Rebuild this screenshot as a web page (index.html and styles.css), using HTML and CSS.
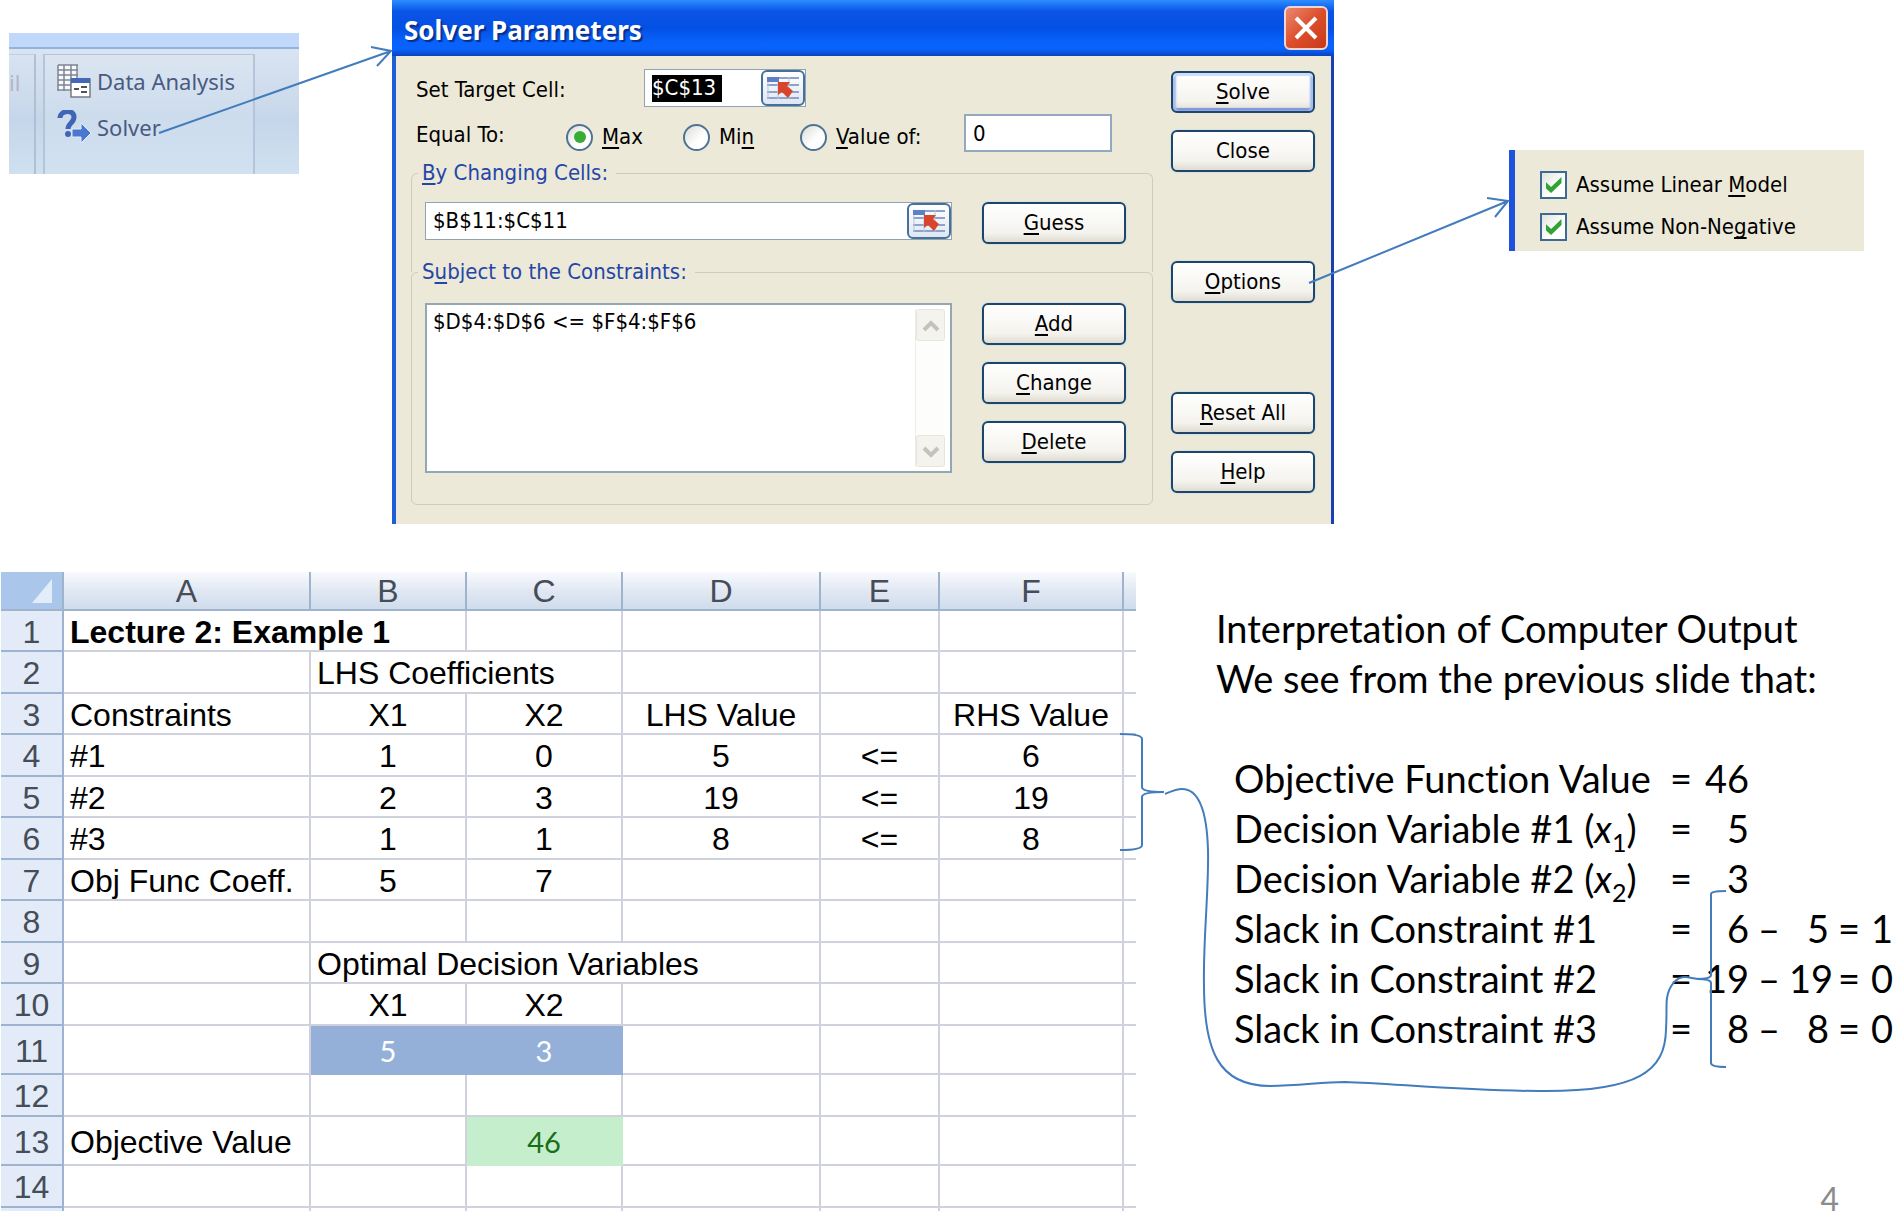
FILE: index.html
```html
<!DOCTYPE html>
<html lang="en">
<head>
<meta charset="utf-8">
<title>Solver Parameters and Computer Output</title>
<link rel="stylesheet" href="styles.css">
</head>
<body>
<svg class="defs" width="0" height="0" aria-hidden="true">
  <symbol id="ref-icon" viewBox="0 0 34 24">
    <path d="M1 2h32M1 9h32M1 16h32M1 22h32" stroke="#8ea3c8" stroke-width="2"/>
    <path d="M2 1v22M12 1v22M23 1v22" stroke="#b9c6de" stroke-width="1"/>
    <path d="M1 1h12v5H1z" fill="#5f80c4"/>
    <path d="M12 6h12l-3 4 6 5-5 7-6-6-4 3z" fill="#d8452c"/>
  </symbol>
</svg>

<main class="slide">
  <section class="top">
    <div class="ribbon">
      <div class="ribbon-tabs"></div>
      <div class="ribbon-body">
        <div class="ribbon-prev">il</div>
        <div class="ribbon-group">
          <button class="ribbon-item" type="button">
            <svg width="34" height="34" viewBox="0 0 34 34" aria-hidden="true">
              <path d="M1 1h20v26H1z" fill="#f7f9fc"/>
              <path d="M1 1h20M1 6h20M1 11h20M1 16h20M1 21h14M1 26h14M1 1v26M7 1v26M14 1v26M20 1v14" fill="none" stroke="#7d8492" stroke-width="1.5"/>
              <path d="M14 15h19v18H14z" fill="#fff" stroke="#777c86" stroke-width="1.5"/>
              <path d="M14 14h19v5H14z" fill="#4468b8"/>
              <path d="M17 25h5M24 23h6M24 28h6" stroke="#555" stroke-width="2"/>
            </svg>
            <span>Data Analysis</span>
          </button>
          <button class="ribbon-item" type="button">
            <svg width="34" height="34" viewBox="0 0 34 34" aria-hidden="true">
              <path d="M3 8C3 0 17-1 17 7c0 6-6 6-6 12" fill="none" stroke="#3f66b5" stroke-width="5"/>
              <circle cx="11" cy="24" r="3" fill="#3f66b5"/>
              <path d="M15 19h9v-6l10 10-10 10v-6h-9z" fill="#4a78d0" stroke="#e3ecf8" stroke-width="1"/>
            </svg>
            <span>Solver</span>
          </button>
        </div>
        <div class="ribbon-rest"></div>
      </div>
    </div>

    <form class="dialog">
      <header class="titlebar">
        <h1>Solver Parameters</h1>
        <button class="close" type="button" aria-label="Close window">
          <svg width="24" height="24" viewBox="0 0 24 24" aria-hidden="true"><path d="M2 2l20 20M22 2L2 22" stroke="#fff" stroke-width="4"/></svg>
        </button>
      </header>
      <div class="dialog-body">
        <div class="settings">
          <div class="row">
            <label class="row-label" for="target">Set Target Cell:</label>
            <div class="ref-box ref-small">
              <input class="selected" id="target" type="text" value="$C$13">
              <button class="ref-btn" type="button" aria-label="Select target cell"><svg width="34" height="24" aria-hidden="true"><use href="#ref-icon"/></svg></button>
            </div>
          </div>
          <div class="row">
            <span class="row-label">Equal To:</span>
            <div class="radios">
              <label class="radio"><input type="radio" name="equal" checked><span><u>M</u>ax</span></label>
              <label class="radio"><input type="radio" name="equal"><span>Mi<u>n</u></span></label>
              <label class="radio"><input type="radio" name="equal"><span><u>V</u>alue of:</span></label>
            </div>
            <input class="value" type="text" value="0" aria-label="Value">
          </div>
          <fieldset class="changing">
            <legend><u>B</u>y Changing Cells:</legend>
            <div class="pair">
              <div class="ref-box">
                <input type="text" value="$B$11:$C$11" aria-label="Changing cells">
                <button class="ref-btn" type="button" aria-label="Select changing cells"><svg width="34" height="24" aria-hidden="true"><use href="#ref-icon"/></svg></button>
              </div>
              <button class="btn" type="button"><span><u>G</u>uess</span></button>
            </div>
          </fieldset>
          <fieldset class="constraints">
            <legend>S<u>u</u>bject to the Constraints:</legend>
            <div class="pair">
              <div class="list-box">
                <select size="5" aria-label="Constraints"><option>$D$4:$D$6 &lt;= $F$4:$F$6</option></select>
                <div class="scrollbar">
                  <button type="button" aria-label="Scroll up"><svg width="18" height="12" viewBox="0 0 18 12" aria-hidden="true"><path d="M2 10l7-7 7 7" fill="none" stroke="#c4c3ba" stroke-width="4"/></svg></button>
                  <button type="button" aria-label="Scroll down"><svg width="18" height="12" viewBox="0 0 18 12" aria-hidden="true"><path d="M2 2l7 7 7-7" fill="none" stroke="#c4c3ba" stroke-width="4"/></svg></button>
                </div>
              </div>
              <div class="stack">
                <button class="btn" type="button"><span><u>A</u>dd</span></button>
                <button class="btn" type="button"><span><u>C</u>hange</span></button>
                <button class="btn" type="button"><span><u>D</u>elete</span></button>
              </div>
            </div>
          </fieldset>
        </div>
        <div class="actions">
          <div class="stack">
            <button class="btn default" type="button"><span><u>S</u>olve</span></button>
            <button class="btn" type="button"><span>Close</span></button>
          </div>
          <button class="btn" type="button"><span><u>O</u>ptions</span></button>
          <div class="stack">
            <button class="btn" type="button"><span><u>R</u>eset All</span></button>
            <button class="btn" type="button"><span><u>H</u>elp</span></button>
          </div>
        </div>
      </div>
    </form>

    <div class="options">
      <label class="check"><input type="checkbox" checked><span>Assume Linear <u>M</u>odel</span></label>
      <label class="check"><input type="checkbox" checked><span>Assume Non-Ne<u>g</u>ative</span></label>
    </div>

    <svg class="connectors" viewBox="0 0 1895 524" preserveAspectRatio="none" aria-hidden="true">
      <path d="M159 133L391 51M371 47L391 51L377 66"/>
      <path d="M1309 283L1508 201M1487 198L1508 201L1495 217"/>
    </svg>
  </section>

  <section class="bottom">
    <table class="sheet">
      <colgroup><col class="c-row"><col class="c-a"><col class="c-b"><col class="c-b"><col class="c-d"><col class="c-e"><col class="c-f"><col class="c-g"></colgroup>
      <thead>
        <tr><th class="corner"><svg width="20" height="24" viewBox="0 0 20 24" aria-hidden="true"><path d="M20 0v24H0z" fill="#e3edf9"/></svg></th><th>A</th><th>B</th><th>C</th><th>D</th><th>E</th><th>F</th><th></th></tr>
      </thead>
      <tbody>
        <tr><th>1</th><td class="title" colspan="2">Lecture 2: Example 1</td><td></td><td></td><td></td><td></td><td></td></tr>
        <tr><th>2</th><td></td><td class="text" colspan="2">LHS Coefficients</td><td></td><td></td><td></td><td></td></tr>
        <tr><th>3</th><td class="text">Constraints</td><td>X1</td><td>X2</td><td>LHS Value</td><td></td><td>RHS Value</td><td></td></tr>
        <tr><th>4</th><td class="text">#1</td><td>1</td><td>0</td><td>5</td><td>&lt;=</td><td>6</td><td></td></tr>
        <tr><th>5</th><td class="text">#2</td><td>2</td><td>3</td><td>19</td><td>&lt;=</td><td>19</td><td></td></tr>
        <tr><th>6</th><td class="text">#3</td><td>1</td><td>1</td><td>8</td><td>&lt;=</td><td>8</td><td></td></tr>
        <tr><th>7</th><td class="text">Obj Func Coeff.</td><td>5</td><td>7</td><td></td><td></td><td></td><td></td></tr>
        <tr><th>8</th><td></td><td></td><td></td><td></td><td></td><td></td><td></td></tr>
        <tr><th>9</th><td></td><td class="text" colspan="3">Optimal Decision Variables</td><td></td><td></td><td></td></tr>
        <tr><th>10</th><td></td><td>X1</td><td>X2</td><td></td><td></td><td></td><td></td></tr>
        <tr class="tall"><th>11</th><td></td><td class="decision">5</td><td class="decision">3</td><td></td><td></td><td></td><td></td></tr>
        <tr><th>12</th><td></td><td></td><td></td><td></td><td></td><td></td><td></td></tr>
        <tr class="tall"><th>13</th><td class="text">Objective Value</td><td></td><td class="objective">46</td><td></td><td></td><td></td><td></td></tr>
        <tr><th>14</th><td></td><td></td><td></td><td></td><td></td><td></td><td></td></tr>
        <tr class="cut"><th></th><td></td><td></td><td></td><td></td><td></td><td></td><td></td></tr>
      </tbody>
    </table>

    <article class="notes">
      <p>Interpretation of Computer Output<br>We see from the previous slide that:</p>
      <table class="results">
        <colgroup><col><col class="r-eq"><col class="r-num"><col class="r-op"><col class="r-op"><col class="r-op"><col class="r-out"></colgroup>
        <tbody>
          <tr><th>Objective Function Value</th><td>=</td><td class="num">46</td><td></td><td></td><td></td><td></td></tr>
          <tr><th>Decision Variable #1 (<i>x</i><sub>1</sub>)</th><td>=</td><td class="num">5</td><td></td><td></td><td></td><td></td></tr>
          <tr><th>Decision Variable #2 (<i>x</i><sub>2</sub>)</th><td>=</td><td class="num">3</td><td></td><td></td><td></td><td></td></tr>
          <tr><th>Slack in Constraint #1</th><td>=</td><td class="num">6</td><td>–</td><td class="num">5</td><td>=</td><td>1</td></tr>
          <tr><th>Slack in Constraint #2</th><td>=</td><td class="num">19</td><td>–</td><td class="num">19</td><td>=</td><td>0</td></tr>
          <tr><th>Slack in Constraint #3</th><td>=</td><td class="num">8</td><td>–</td><td class="num">8</td><td>=</td><td>0</td></tr>
        </tbody>
      </table>
      <footer class="page-number">4</footer>
    </article>

    <svg class="connectors" viewBox="0 572 1895 645" preserveAspectRatio="none" aria-hidden="true">
      <path d="M1120 734Q1142 734 1142 739V787Q1142 792 1164 792Q1142 792 1142 797V845Q1142 850 1120 850"/>
      <path d="M1165 794C1172 791 1176 789 1182 789C1200 789 1207 815 1208 850C1209 890 1203 940 1204 985C1204 1050 1218 1086 1270 1086C1300 1086 1320 1082 1345 1082C1390 1083 1460 1091 1540 1091C1640 1092 1665 1070 1666 1030C1667 1010 1666 1005 1667 998C1669 985 1677 977 1685 977C1690 977 1694 979 1700 979"/>
      <path d="M1726 891Q1711 891 1711 894V975Q1711 979 1697 979Q1711 979 1711 983V1063Q1711 1067 1726 1067"/>
    </svg>
  </section>
</main>
</body>
</html>
```
FILE: styles.css
```css
* { box-sizing: border-box; }

body {
  margin: 0;
  background: #fff;
  color: #000;
  font-family: "Lato", sans-serif;
}

button, input, select {
  margin: 0;
  padding: 0;
  border: 0;
  background: none;
  color: inherit;
  font: inherit;
}

.defs { position: absolute; }

.top, .bottom {
  position: relative;
  display: grid;
  align-items: start;
}

.top { grid-template-columns: 9fr 290fr 93fr 942fr 175fr 355fr 31fr; }

.connectors {
  position: absolute;
  inset: 0;
  width: 100%;
  height: 100%;
  pointer-events: none;
}

.connectors path {
  fill: none;
  stroke: #427cbc;
  stroke-width: 2;
  vector-effect: non-scaling-stroke;
}

/* Ribbon fragment */
.ribbon {
  grid-column: 2;
  min-width: 0;
  margin-top: 33px;
  font-family: "Noto Sans", sans-serif;
  font-size: 22px;
  color: #4a5a80;
}

.ribbon-tabs {
  height: 16px;
  background: #c0d9fa;
  border-bottom: 2px solid #93b3db;
}

.ribbon-body {
  display: flex;
  height: 125px;
  padding-top: 5px;
  background: linear-gradient(#d9e4f2, #cbd9eb 45%, #c5d6eb 55%, #cfe0f0);
}

.ribbon-prev {
  width: 27px;
  padding-top: 12px;
  border-top: 1px solid #c2cfdf;
  border-right: 2px solid #b0bfd3;
  color: #b3b6c3;
  line-height: 30px;
}

.ribbon-group {
  flex: 1;
  display: flex;
  flex-direction: column;
  gap: 12px;
  margin-left: 7px;
  padding: 9px 0 0 12px;
  border: 2px solid #b5c4d8;
  border-width: 1px 2px 0;
  background: linear-gradient(#dbe5f1, #cddced 50%, #d1e1f0);
}

.ribbon-rest { width: 44px; }

.ribbon-item {
  display: flex;
  align-items: center;
  gap: 6px;
  height: 34px;
  line-height: 30px;
  white-space: nowrap;
}

/* Solver dialog */
.dialog {
  grid-column: 4;
  border: solid #1e5fd8;
  border-width: 0 3px 0 4px;
  border-right-color: #1a3fb4;
  background: #ece9d8;
}

.dialog, .options {
  font-family: "DejaVu Sans Condensed", "DejaVu Sans", sans-serif;
  font-size: 22px;
  line-height: 28px;
}

u {
  text-decoration-thickness: 2px;
  text-decoration-skip-ink: none;
  text-underline-offset: 3px;
}

.titlebar {
  display: flex;
  align-items: center;
  justify-content: space-between;
  height: 56px;
  margin: 0 -3px 0 -4px;
  padding: 0 6px 0 12px;
  background: linear-gradient(#2d8dff, #0a55e6 20%, #0450e4 50%, #0862fb 75%, #0862fb 88%, #0a43bd);
}

.titlebar h1 {
  margin: 0;
  padding-top: 3px;
  color: #fff;
  font-family: "Noto Sans", sans-serif;
  font-size: 26px;
  font-weight: 700;
  line-height: 36px;
  text-shadow: 2px 2px 1px #0a2f8c;
}

.close {
  display: grid;
  place-items: center;
  width: 44px;
  height: 44px;
  border: 2px solid #f3d5d0;
  border-radius: 6px;
  background: linear-gradient(135deg, #e98a70, #dd4e2c 50%, #c8391a);
}

.dialog-body {
  display: flex;
  gap: 18px;
  padding: 13px 16px 19px 15px;
}

.settings { flex: 1; min-width: 0; }

.row {
  display: flex;
  align-items: center;
  height: 38px;
  margin-bottom: 7px;
  padding-left: 5px;
}

.row-label { width: 150px; padding-top: 3px; white-space: nowrap; }

.ref-box {
  flex: 1;
  display: flex;
  align-items: center;
  height: 38px;
  border: 1px solid #8fa3b5;
  background: #fff;
}

.ref-box input { flex: 1; min-width: 0; padding-left: 7px; }

.ref-small {
  flex: none;
  justify-content: space-between;
  width: 162px;
  margin-left: 78px;
  padding-left: 7px;
}

.ref-small .selected {
  flex: none;
  width: 70px;
  height: 27px;
  padding: 0;
  background: #000;
  color: #fff;
}

.ref-btn {
  display: grid;
  place-items: center;
  width: 44px;
  height: 36px;
  border: 2px solid #46719b;
  border-radius: 6px;
  background: linear-gradient(#fff, #dfe6f2);
}

.radios { display: flex; flex: 1; padding-top: 8px; }

.radio {
  display: flex;
  align-items: center;
  gap: 9px;
  width: 117px;
  white-space: nowrap;
}

.radio input {
  appearance: none;
  flex: none;
  display: grid;
  place-items: center;
  width: 27px;
  height: 27px;
  border: 2px solid #4d7396;
  border-radius: 50%;
  background: linear-gradient(135deg, #dcdcd4, #fff 60%);
}

.radio input:checked::after {
  content: "";
  width: 12px;
  height: 12px;
  border-radius: 50%;
  background: #37ad37;
}

.value {
  width: 148px;
  height: 38px;
  margin-right: 41px;
  padding-left: 7px;
  border: 2px solid #94a9c0;
  background: #fff;
}

fieldset {
  min-width: 0;
  margin: 0;
  padding: 15px 26px 28px 13px;
  border: 1px solid #cfccb8;
  border-radius: 6px;
}

legend {
  margin-left: -7px;
  padding: 0 8px 0 4px;
  color: #2446a8;
  line-height: 28px;
}

.changing { border-bottom: 0; border-radius: 6px 6px 0 0; }

.constraints {
  margin-top: -14px;
  padding-top: 17px;
  padding-bottom: 31px;
}

.pair { display: flex; gap: 30px; }

.list-box {
  flex: 1;
  display: flex;
  min-width: 0;
  height: 170px;
  padding: 4px 5px 4px 0;
  border: 2px solid #93a8b2;
  background: #fff;
}

.list-box select {
  flex: 1;
  min-width: 0;
  overflow: hidden;
  outline: 0;
}

.list-box option { padding: 0 6px; min-height: 28px; line-height: 28px; }

.scrollbar {
  display: flex;
  flex-direction: column;
  justify-content: space-between;
  width: 30px;
  border-left: 1px solid #eeede5;
  background: #fdfdfb;
}

.scrollbar button {
  height: 32px;
  border: 1px solid #e6e5dc;
  border-radius: 3px;
  background: #f4f3ee;
}

.stack { display: flex; flex-direction: column; gap: 17px; }

.btn {
  display: grid;
  place-items: center;
  width: 144px;
  height: 42px;
  border: 2px solid #1f4668;
  border-radius: 6px;
  background: linear-gradient(#fff, #f4f3ee 75%, #dfddd2);
  box-shadow: 0 0 1px 1px #d5e2e6;
}

.default { box-shadow: inset 0 3px 1px #c9defa, inset 3px 0 2px #a5bdee, inset -3px 0 2px #a5bdee, inset 0 -3px 1px #7a93dc; }

.pair .btn { flex: none; }

.actions {
  display: flex;
  flex-direction: column;
  justify-content: space-between;
  height: 424px;
  padding: 2px 0 0;
}

/* Options fragment */
.options {
  grid-column: 6;
  display: flex;
  flex-direction: column;
  gap: 14px;
  min-width: 0;
  height: 101px;
  margin-top: 150px;
  padding: 21px 0 0 25px;
  border-left: 6px solid #1f52dc;
  background: #ece9d8;
  white-space: nowrap;
}

.check { display: flex; align-items: center; gap: 9px; }

.check input {
  appearance: none;
  display: grid;
  place-items: center;
  width: 27px;
  height: 28px;
  border: 2px solid #3d6a94;
  background: linear-gradient(135deg, #e2e2dc, #fff 60%);
}

.check input:checked::after {
  content: "";
  width: 16px;
  height: 16px;
  background: #2fa336;
  clip-path: polygon(0 30%, 35% 62%, 100% 0, 100% 38%, 35% 100%, 0 68%);
}

/* Spreadsheet */
.bottom {
  grid-template-columns: 1fr 1135fr 80fr 679fr;
  align-items: stretch;
  min-height: 645px;
  margin-top: 48px;
}

.sheet {
  grid-column: 2;
  align-self: start;
  width: 100%;
  table-layout: fixed;
  border-collapse: separate;
  border-spacing: 0;
  font-family: "Liberation Sans", sans-serif;
  font-size: 32px;
  line-height: 36px;
}

.c-row { width: 63px; }
.c-a { width: 247px; }
.c-b { width: 156px; }
.c-d { width: 198px; }
.c-e { width: 119px; }
.c-f { width: 184px; }
.c-g { width: 12px; }

.sheet th, .sheet td {
  height: 41px;
  padding: 2px 0 0;
  border: solid #cfd1dc;
  border-width: 0 2px 2px 0;
  text-align: center;
  white-space: nowrap;
}

.sheet th:last-child, .sheet td:last-child { border-right: 0; }

.sheet tbody tr:nth-child(even) > * { height: 42px; }
.sheet tbody .tall > * { height: 49px; }
.sheet tbody .cut > * { height: 3px; padding: 0; border-bottom: 0; line-height: 0; }

.sheet th { color: #454d59; font-weight: 400; }

.sheet thead th {
  height: 39px;
  padding: 0;
  border-color: #9fb3cc;
  background: linear-gradient(#f8fafd, #e2e8f3 50%, #cfdcec);
}

.sheet tbody th {
  border-color: #9db3d0;
  background: #e2ebf7;
}

.sheet thead .corner {
  padding-right: 10px;
  background: #aac6ea;
}

.corner svg { display: block; margin-left: auto; }

.sheet .text, .sheet .title { padding-left: 6px; text-align: left; }
.sheet .title { font-weight: 700; }

.sheet .decision, .sheet .objective { font-family: "Lato", sans-serif; font-size: 29px; }
.sheet .decision { border-color: #95b0d8; background: #95b0d8; color: #fff; }
.sheet .objective { border-color: #c5eecd; background: #c5eecd; color: #1a6e1a; }

/* Interpretation text */
.notes {
  grid-column: 4;
  display: flex;
  flex-direction: column;
  min-width: 0;
  padding-top: 31px;
  font-size: 38px;
  font-variant-ligatures: none;
  line-height: 50px;
}

.notes p { margin: 0 0 50px; white-space: nowrap; }

.results {
  width: 100%;
  padding-left: 18px;
  table-layout: fixed;
  border-collapse: separate;
  border-spacing: 0;
}

.results th, .results td {
  height: 50px;
  padding: 0;
  font-weight: 400;
  text-align: center;
  white-space: nowrap;
}

.results th { text-align: left; }
.results .num { text-align: right; }
.results sub { font-size: 25px; line-height: 0; }

.r-eq { width: 36px; }
.r-num { width: 50px; }
.r-op { width: 40px; }
.r-out { width: 26px; }

.page-number {
  margin-top: auto;
  padding-right: 56px;
  color: #8b8b8b;
  font-size: 32px;
  line-height: 36px;
  text-align: right;
}
```
